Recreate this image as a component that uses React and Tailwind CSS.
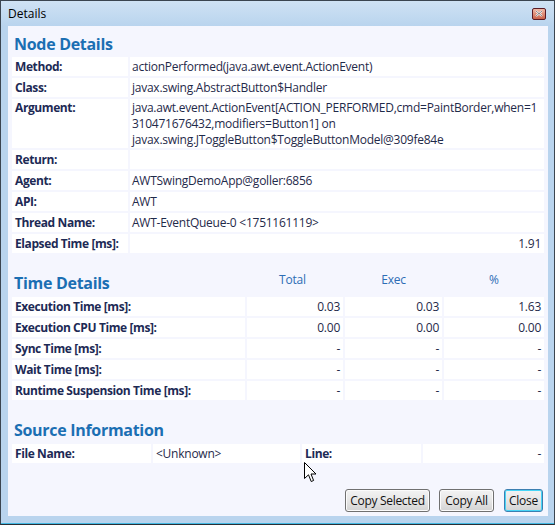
import React from 'react';

const font = { fontFamily: '"Open Sans", "Noto Sans", sans-serif' };

const nodeRows = [
    { label: 'Method:', value: ['actionPerformed(java.awt.event.ActionEvent)'] },
    { label: 'Class:', value: ['javax.swing.AbstractButton$Handler'] },
    {
        label: 'Argument:',
        value: [
            'java.awt.event.ActionEvent[ACTION_PERFORMED,cmd=PaintBorder,when=1',
            '310471676432,modifiers=Button1] on',
            'javax.swing.JToggleButton$ToggleButtonModel@309fe84e',
        ],
    },
    { label: 'Return:', value: [''] },
    { label: 'Agent:', value: ['AWTSwingDemoApp@goller:6856'] },
    { label: 'API:', value: ['AWT'] },
    { label: 'Thread Name:', value: ['AWT-EventQueue-0 <1751161119>'] },
    { label: 'Elapsed Time [ms]:', value: ['1.91'], right: true },
];

const timeRows = [
    ['Execution Time [ms]:', '0.03', '0.03', '1.63'],
    ['Execution CPU Time [ms]:', '0.00', '0.00', '0.00'],
    ['Sync Time [ms]:', '-', '-', '-'],
    ['Wait Time [ms]:', '-', '-', '-'],
    ['Runtime Suspension Time [ms]:', '-', '-', '-'],
];

function Label({ children }) {
    return <div className="bg-white h-[19px] pl-[3px] text-[12px] leading-[19px] font-bold tracking-[-0.4px] text-[#1d2a55] whitespace-nowrap overflow-hidden">{children}</div>;
}

function Num({ children }) {
    return <div className="bg-white h-[19px] pr-[3px] text-right text-[12px] leading-[19px] tracking-[-0.25px] text-[#1f2a4a]">{children}</div>;
}

function Heading({ children, className = '' }) {
    return <div className={`h-[20px] text-[16px] leading-[20px] font-bold tracking-[-0.3px] text-[#1b6fb3] whitespace-nowrap ${className}`}>{children}</div>;
}

function Button({ children, focused, className = '' }) {
    return (
        <button
            className={`h-[23px] rounded-[3px] border text-[12px] tracking-[-0.3px] text-[#111] bg-gradient-to-b from-[#f3f3f3] via-[#e6e6e6] to-[#d3d3d3] ${focused ? 'border-[#3c7fb1] shadow-[inset_0_0_0_1px_#48d5f6]' : 'border-[#707070] shadow-[inset_0_0_0_1px_#fbfbfb]'} ${className}`}
        >
            {children}
        </button>
    );
}

export default function App() {
    return (
        <div style={font} className="w-[555px] h-[525px] flex flex-col bg-[#b9d4ee] border border-[#3b4550] border-b-[#2a2f36] overflow-hidden">
            {/* title bar */}
            <div className="h-[25px] flex items-center pl-[7px] pr-[8px] bg-gradient-to-b from-[#cfe2f4] to-[#b9d4ee]">
                <span className="text-[12px] text-black leading-none">Details</span>
                <div className="ml-auto w-[14px] h-[12px] border border-[#5a1a24] rounded-[2px] bg-gradient-to-b from-[#f0b8a6] to-[#c9614a] flex items-center justify-center">
                    <svg width="8" height="7" viewBox="0 0 8 7">
                        <path d="M1 1 L7 6 M7 1 L1 6" stroke="#fff" strokeWidth="2" />
                        <path d="M1 1 L7 6 M7 1 L1 6" stroke="#3a2a2a" strokeWidth="0.6" />
                    </svg>
                </div>
            </div>

            {/* content */}
            <div className="relative ml-[7px] mr-[6px] h-[490px] bg-[#f5f6fe] flex flex-col">
                <Heading className="pl-[6px] mt-[8px] mb-[3px]">Node Details</Heading>

                <div className="mx-[4px] grid grid-cols-[116px_minmax(0,1fr)] gap-[2px]">
                    {nodeRows.map((r) => (
                        <React.Fragment key={r.label}>
                            <div className={`bg-white pl-[3px] text-[12px] font-bold tracking-[-0.4px] text-[#1d2a55] whitespace-nowrap ${r.value.length > 1 ? 'h-[49px] leading-[16px] pt-[1px]' : 'h-[19px] leading-[19px]'}`}>
                                {r.label}
                            </div>
                            <div className={`bg-white text-[12px] tracking-[-0.25px] text-[#1f2a4a] whitespace-nowrap overflow-hidden ${r.right ? 'text-right pr-[3px]' : 'pl-[2px]'} ${r.value.length > 1 ? 'h-[49px] leading-[16px] pt-[1px]' : 'h-[19px] leading-[19px]'}`}>
                                {r.value.map((line, i) => (
                                    <div key={i}>{line}</div>
                                ))}
                            </div>
                        </React.Fragment>
                    ))}
                </div>

                {/* time details */}
                <div className="mx-[4px] mt-[17px] h-[27px] grid grid-cols-[233px_96px_97px_minmax(0,1fr)] gap-x-[2px] items-start">
                    <Heading className="pl-[2px] mt-[3px]">Time Details</Heading>
                    <div className="text-center text-[12px] leading-[20px] tracking-[-0.2px] text-[#2d6db5] pr-[5px]">Total</div>
                    <div className="text-center text-[12px] leading-[20px] tracking-[-0.2px] text-[#2d6db5]">Exec</div>
                    <div className="text-center text-[12px] leading-[20px] text-[#2d6db5]">%</div>
                </div>
                <div className="mx-[4px] grid grid-cols-[233px_96px_97px_minmax(0,1fr)] gap-[2px]">
                    {timeRows.map((r) => (
                        <React.Fragment key={r[0]}>
                            <Label>{r[0]}</Label>
                            <Num>{r[1]}</Num>
                            <Num>{r[2]}</Num>
                            <Num>{r[3]}</Num>
                        </React.Fragment>
                    ))}
                </div>

                {/* source information */}
                <Heading className="pl-[6px] mt-[20px] mb-[4px]">Source Information</Heading>
                <div className="mx-[4px] grid grid-cols-[139px_147px_119px_minmax(0,1fr)] gap-[2px]">
                    <Label>File Name:</Label>
                    <div className="bg-white h-[19px] pl-[3px] text-[12px] leading-[19px] tracking-[-0.25px] text-[#1f2a4a]">&lt;Unknown&gt;</div>
                    <Label>Line:</Label>
                    <Num>-</Num>
                </div>

                <div className="mt-auto mb-[4px] mr-[5px] flex justify-end gap-[9px]">
                    <Button className="w-[85px]">Copy Selected</Button>
                    <Button className="w-[55px]">Copy All</Button>
                    <Button focused className="w-[39px] ml-[1px]">Close</Button>
                </div>

                {/* mouse pointer */}
                <svg className="absolute left-[296px] top-[436px]" width="13" height="21" viewBox="0 0 13 21">
                    <path d="M0.5 0.5 L0.5 16.5 L4.5 12.8 L7.2 19.5 L9.6 18.5 L7 12 L12 12 Z" fill="#fff" stroke="#000" strokeWidth="1" strokeLinejoin="miter" />
                </svg>
            </div>

            <div className="mt-auto h-[1px] bg-[#43b9e3]" />
        </div>
    );
}
